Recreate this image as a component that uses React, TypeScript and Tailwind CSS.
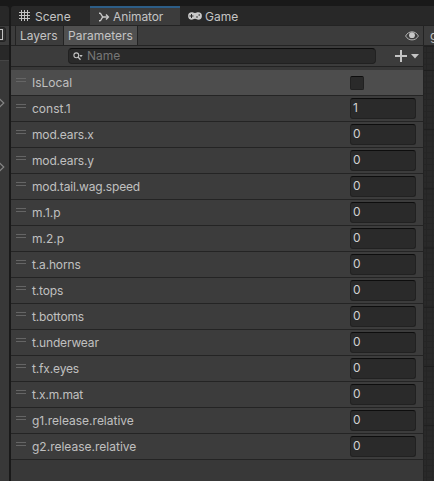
import React from "react";

type Param = { name: string; value: string | null; tight?: boolean };

const params: Param[] = [
  { name: "IsLocal", value: null },
  { name: "const.1", value: "1" },
  { name: "mod.ears.x", value: "0", tight: true },
  { name: "mod.ears.y", value: "0", tight: true },
  { name: "mod.tail.wag.speed", value: "0", tight: true },
  { name: "m.1.p", value: "0" },
  { name: "m.2.p", value: "0" },
  { name: "t.a.horns", value: "0", tight: true },
  { name: "t.tops", value: "0", tight: true },
  { name: "t.bottoms", value: "0", tight: true },
  { name: "t.underwear", value: "0", tight: true },
  { name: "t.fx.eyes", value: "0", tight: true },
  { name: "t.x.m.mat", value: "0", tight: true },
  { name: "g1.release.relative", value: "0" },
  { name: "g2.release.relative", value: "0" },
];

function GridIcon() {
  return (
    <svg width="11" height="11" viewBox="0 0 11 11" className="shrink-0" shapeRendering="crispEdges">
      <path d="M2.5 0v11M5.5 0v11M8.5 0v11M0 2.5h11M0 5.5h11M0 8.5h11" stroke="#c4c4c4" strokeWidth="1" fill="none" />
    </svg>
  );
}

function AnimatorIcon() {
  return (
    <svg width="12" height="10" viewBox="0 0 12 10" className="shrink-0" fill="none" stroke="#c8c8c8" strokeWidth="1.4">
      <path d="M1 1.2h1c1.4 0 1.3 3.8 3.4 3.8H10M1 8.8h1c1.4 0 1.3-3.8 3.4-3.8" />
      <path d="M8 2.6L10.4 5 8 7.4" />
    </svg>
  );
}

function GameIcon() {
  return (
    <svg width="14" height="8" viewBox="0 0 14 8" className="shrink-0">
      <path d="M3.8.3C5 .3 5.4.9 7 .9S9 .3 10.2.3A3.7 3.7 0 0 1 10.2 7.7C9 7.7 8.6 6.8 7 6.8S5 7.7 3.8 7.7A3.7 3.7 0 0 1 3.8.3Z" fill="#c8c8c8" />
      <path d="M3.5 2v4M1.5 4h4" stroke="#282828" strokeWidth="1" />
      <circle cx="9" cy="5" r=".8" fill="#282828" />
      <circle cx="11.2" cy="3" r=".8" fill="#282828" />
    </svg>
  );
}

function SearchIcon() {
  return (
    <svg width="11" height="9" viewBox="0 0 11 9" className="shrink-0">
      <circle cx="3.3" cy="3.3" r="2.4" fill="none" stroke="#c4c4c4" strokeWidth="1.1" />
      <path d="M5 5l2.5 2.7" stroke="#c4c4c4" strokeWidth="1.3" />
      <path d="M6.3 3h3.4L8 5.3z" fill="#c4c4c4" />
    </svg>
  );
}

function EyeIcon() {
  return (
    <svg width="14" height="10" viewBox="0 0 14 10" className="shrink-0">
      <path d="M.6 5C3.4-.6 10.6-.6 13.4 5 10.6 10.2 3.4 10.2.6 5Z" fill="none" stroke="#b4b4b4" strokeWidth="1" />
      <circle cx="7" cy="4.2" r="2.9" fill="#c8c8c8" />
    </svg>
  );
}

function Chevron() {
  return (
    <svg width="5" height="10" viewBox="0 0 5 10" className="block">
      <path d="M-.5 .8L3.8 5-.5 9.2" fill="none" stroke="#858585" strokeWidth="1.2" />
    </svg>
  );
}

function LeftPanel() {
  return (
    <div className="flex h-full w-[9px] shrink-0 flex-col overflow-hidden">
      <div className="h-[19px] rounded-tr-[3px] bg-[#282828]" />
      <div className="flex h-5 items-start border-t border-[#232323] bg-[#3c3c3c]">
        <div className="mt-[1px] flex h-[15px] w-[6px] items-center rounded-r-[3px] border-y border-r border-[#222] bg-[#303030]">
          <div className="h-[11px] w-[3px] border-y border-r border-[#c4c4c4]" />
        </div>
      </div>
      <div className="h-[15px] border-t border-[#232323] bg-[#282828]" />
      <div className="h-px bg-[#454545]" />
      <div className="flex-1 bg-[#383838] pt-[37px]">
        <Chevron />
        <div className="h-[54px]" />
        <Chevron />
      </div>
    </div>
  );
}

function Tabs() {
  return (
    <div className="flex h-[19px] shrink-0 rounded-tl-[3px] bg-[#282828] text-[#c4c4c4]">
      <div className="flex w-[79px] items-center gap-[5px] pl-[8px]">
        <GridIcon />
        <span className="mt-[2px] leading-5">Scene</span>
      </div>
      <div className="flex w-[90px] items-center gap-[3px] border-t-2 border-[#2c5d87] bg-[#3c3c3c] pl-[8px]">
        <AnimatorIcon />
        <span className="leading-5 tracking-[-0.1px]">Animator</span>
      </div>
      <div className="flex items-center gap-[3px] pl-[8px]">
        <GameIcon />
        <span className="mt-[2px] leading-5">Game</span>
      </div>
    </div>
  );
}

function ParamRow({ name, value, tight }: Param) {
  return (
    <div className={`flex h-[26px] shrink-0 border-b border-[#242424] ${value === null ? "bg-[#4d4d4d]" : "bg-[#3c3c3c]"}`}>
      <div className="ml-[5px] mt-[8px] h-[4px] w-[10px] shrink-0 border-y border-[#656565]" />
      <span className={`ml-[6px] w-[318px] shrink-0 pt-[3px] leading-[19px] ${tight ? "tracking-[-0.16px]" : ""}`}>{name}</span>
      {value === null ? (
        <div className="mt-[6px] h-[14px] w-[14px] rounded-[2px] border border-[#212121] border-t-[#0d0d0d] bg-[#2a2a2a]" />
      ) : (
        <div className="mt-[2px] h-[21px] w-[66px] rounded-[3px] border border-[#212121] border-t-[#0d0d0d] bg-[#2a2a2a] pl-[2px] leading-[17px] text-[#d2d2d2]">
          {value}
        </div>
      )}
    </div>
  );
}

function ParametersPanel() {
  return (
    <div className="flex w-[412px] shrink-0 flex-col bg-[#383838]">
      <div className="flex h-[21px] shrink-0 border-y border-[#232323] bg-[#3c3c3c] text-[#c4c4c4]">
        <div className="w-[4px]" />
        <div className="w-[49px] border-x border-[#232323] pl-[4px] leading-[19px]">Layers</div>
        <div className="w-[74px] border-r border-[#232323] bg-[#505050] pl-[4px] leading-[19px]">Parameters</div>
        <div className="flex flex-1 items-center justify-end pr-[4px] pt-px">
          <EyeIcon />
        </div>
      </div>
      <div className="flex h-[21px] shrink-0 items-start border-b border-[#232323] bg-[#3c3c3c] pl-[57px]">
        <div className="mt-[2px] flex h-[16px] w-[308px] items-center rounded-[4px] border border-[#212121] border-t-[#0d0d0d] bg-[#2a2a2a] pl-[4px]">
          <SearchIcon />
          <span className="-mt-px ml-[3px] self-start leading-[15px] text-[#777]">Name</span>
        </div>
        <svg width="25" height="12" viewBox="0 0 25 12" className="ml-[19px] mt-[4px]">
          <path d="M6 0v12M0 6h12" stroke="#c4c4c4" strokeWidth="2" />
          <path d="M16 4h8l-4 4.5z" fill="#c4c4c4" />
        </svg>
      </div>
      <div className="h-[3px] shrink-0" />
      <div className="flex flex-col text-[#c0c0c0]">
        {params.map((p) => (
          <ParamRow key={p.name} {...p} />
        ))}
      </div>
    </div>
  );
}

function GraphEdge() {
  return (
    <div className="flex min-w-0 flex-1 flex-col overflow-hidden border-l border-[#232323]">
      <div className="h-[21px] shrink-0 overflow-hidden border-y border-[#232323] bg-[#3c3c3c] pl-[6px] leading-[20px] text-[#c4c4c4]">g</div>
      <svg width="10" height="435" className="block bg-[#292929]" shapeRendering="crispEdges">
        <defs>
          <pattern id="minor" width="6" height="5.9" patternUnits="userSpaceOnUse">
            <path d="M0 .5h6M2.5 0v6" stroke="#252525" />
          </pattern>
          <pattern id="major" width="10" height="59.2" y="24" patternUnits="userSpaceOnUse">
            <path d="M0 .5h10" stroke="#1e1e1e" />
          </pattern>
        </defs>
        <rect width="10" height="435" fill="url(#minor)" />
        <rect width="10" height="435" fill="url(#major)" />
        <rect width="10" height="1" fill="#202020" />
      </svg>
    </div>
  );
}

export default function App() {
  return (
    <div className="flex h-[481px] w-[434px] overflow-hidden bg-[#191919] pt-[6px] font-['Inter','Liberation_Sans',sans-serif] text-[12px]">
      <LeftPanel />
      <div className="w-[2px] shrink-0 bg-[#191919]" />
      <div className="flex min-w-0 flex-1 flex-col">
        <Tabs />
        <div className="flex min-h-0 flex-1">
          <ParametersPanel />
          <GraphEdge />
        </div>
      </div>
    </div>
  );
}
